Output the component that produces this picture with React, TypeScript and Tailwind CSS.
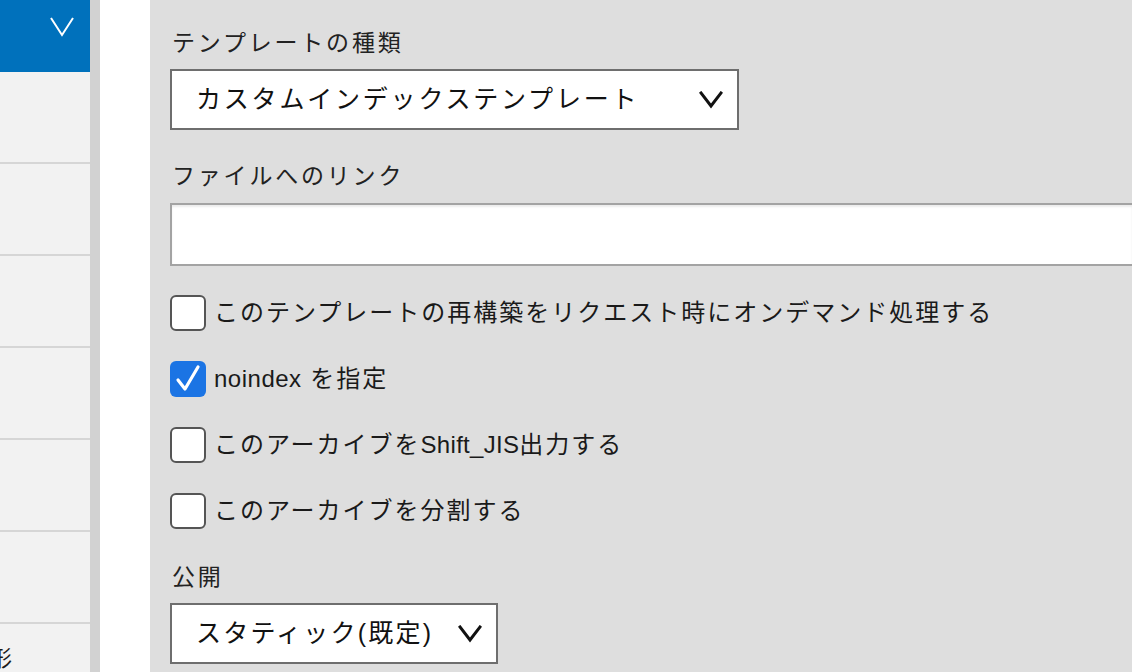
import React from 'react';

const jp = { fontFamily: '"Liberation Sans", "Noto Sans CJK JP", sans-serif' };

const Chevron = ({ className }: { className?: string }) => (
    <svg viewBox="0 0 24 18" className={className} fill="none" stroke="currentColor" strokeWidth={3} strokeLinecap="square">
        <path d="M2 2 L12 15 L22 2" />
    </svg>
);

const Checkbox = ({ checked, label }: { checked?: boolean; label: React.ReactNode }) => (
    <div className="flex items-center h-[36px] gap-[8px]">
        {checked ? (
            <div className="w-[36px] h-[36px] rounded-[6px] bg-[#1b74e4] flex items-center justify-center">
                <svg viewBox="0 0 36 36" className="w-[36px] h-[36px]" fill="none" stroke="white" strokeWidth={3.2} strokeLinecap="round" strokeLinejoin="round">
                    <path d="M8 19 L15 28 L28 6" />
                </svg>
            </div>
        ) : (
            <div className="w-[36px] h-[36px] rounded-[6px] bg-white border-2 border-[#555]" />
        )}
        <span className="text-[24px] tracking-[2px] text-[#1a1a1a] leading-none whitespace-nowrap">{label}</span>
    </div>
);

export default function App() {
    const rows = [0, 1, 2, 3, 4, 5];
    return (
        <div className="w-[1132px] h-[672px] flex overflow-hidden bg-[#dedede]" style={jp}>
            {/* sidebar */}
            <div className="w-[90px] shrink-0 bg-[#f2f2f2] flex flex-col">
                <div className="h-[72px] bg-[#0071bc] flex items-start justify-end pr-[16px] pt-[17px]">
                    <svg viewBox="0 0 24 20" className="w-[24px] h-[20px]" fill="none" stroke="white" strokeWidth={2}>
                        <path d="M1 1 L12 18 L23 1" />
                    </svg>
                </div>
                {rows.map((r) => (
                    <div key={r} className="h-[92px] shrink-0 border-b-2 border-[#d6d6d6]" />
                ))}
                <div className="pt-[24px] ml-[-10px] text-[22px] text-[#1a1a1a] leading-none">形</div>
            </div>
            <div className="w-[10px] shrink-0 bg-[#d2d2d2]" />
            <div className="w-[50px] shrink-0 bg-white" />

            {/* main */}
            <div className="flex-1 pl-[20px] pt-[30px] flex flex-col">
                <div className="ml-[2px] h-[26px] leading-[26px] text-[23px] tracking-[2.8px] text-[#222]">テンプレートの種類</div>
                <div className="mt-[13px] w-[569px] h-[61px] bg-white border-2 border-[#6e6e6e] flex items-center justify-between pl-[24px] pr-[14px]">
                    <span className="text-[25px] tracking-[2.8px] text-[#111] whitespace-nowrap">カスタムインデックステンプレート</span>
                    <Chevron className="w-[24px] h-[18px] text-[#111]" />
                </div>

                <div className="mt-[33px] ml-[2px] h-[26px] leading-[26px] text-[23px] tracking-[2.8px] text-[#222]">ファイルへのリンク</div>
                <div className="mt-[14px] h-[63px] bg-white border-2 border-r-0 border-[#a3a3a3] shadow-[inset_0_2px_2px_rgba(0,0,0,0.08)]" />

                <div className="mt-[29px] flex flex-col gap-[30px]">
                    <Checkbox label="このテンプレートの再構築をリクエスト時にオンデマンド処理する" />
                    <Checkbox checked label={<><span className="tracking-[0.5px]">noindex</span> を指定</>} />
                    <Checkbox label={<>このアーカイブを<span className="tracking-[0.3px]">Shift_JIS</span>出力する</>} />
                    <Checkbox label="このアーカイブを分割する" />
                </div>

                <div className="mt-[35px] ml-[2px] h-[26px] leading-[26px] text-[23px] tracking-[2.8px] text-[#222]">公開</div>
                <div className="mt-[13px] w-[328px] h-[61px] bg-white border-2 border-[#6e6e6e] flex items-center justify-between pl-[24px] pr-[14px]">
                    <span className="text-[25px] tracking-[2.2px] text-[#111] whitespace-nowrap">スタティック(既定)</span>
                    <Chevron className="w-[24px] h-[18px] text-[#111]" />
                </div>
            </div>
        </div>
    );
}
